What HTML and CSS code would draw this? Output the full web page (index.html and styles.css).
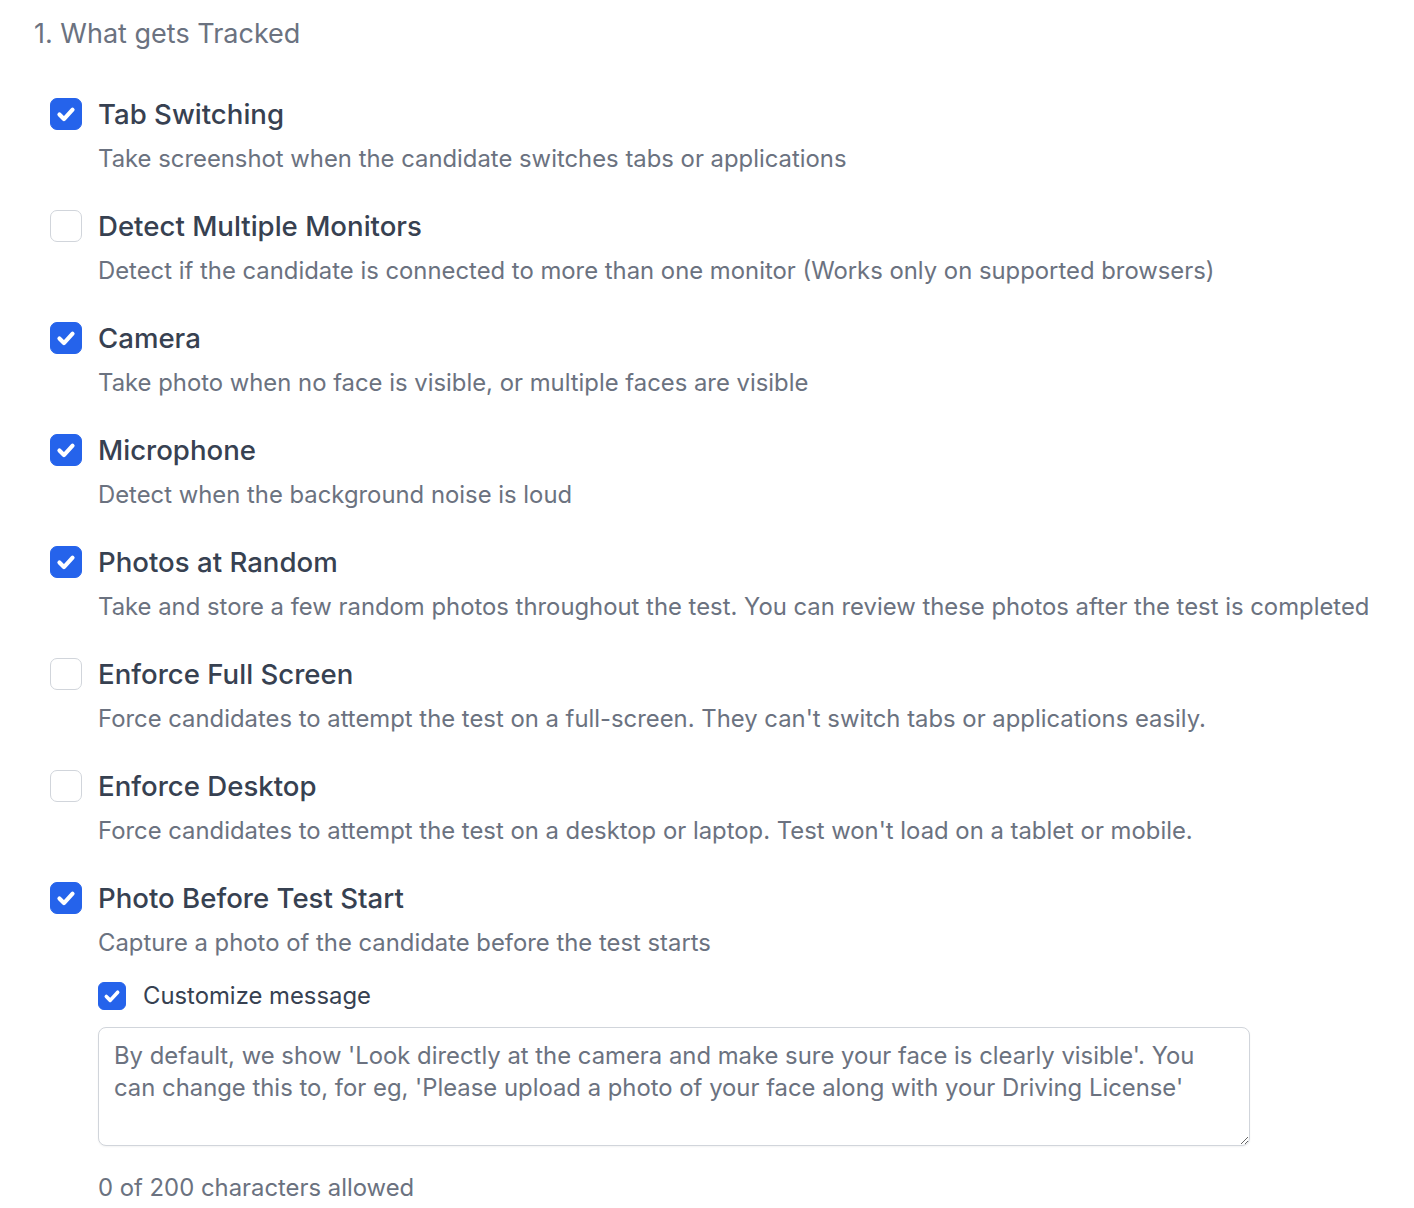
FILE: index.html
```html
<!DOCTYPE html>
<html lang="en">
<head>
    <meta charset="UTF-8">
    <meta name="viewport" content="width=device-width, initial-scale=1.0">
    <title>Proctoring settings</title>
    <link rel="stylesheet" href="styles.css">
</head>
<body>

<div class="page">
    <div class="section-title">1. What gets Tracked</div>

    <div class="options">
        <label class="option">
            <input type="checkbox" class="check" checked>
            <span class="box"><svg viewBox="0 0 16 16"><path d="M4.5 8.3l2.4 2.4 4.6-5"/></svg></span>
            <span class="option-text">
                <span class="option-label">Tab Switching</span>
                <span class="option-desc">Take screenshot when the candidate switches tabs or applications</span>
            </span>
        </label>

        <label class="option">
            <input type="checkbox" class="check">
            <span class="box"><svg viewBox="0 0 16 16"><path d="M4.5 8.3l2.4 2.4 4.6-5"/></svg></span>
            <span class="option-text">
                <span class="option-label">Detect Multiple Monitors</span>
                <span class="option-desc">Detect if the candidate is connected to more than one monitor (Works only on supported browsers)</span>
            </span>
        </label>

        <label class="option">
            <input type="checkbox" class="check" checked>
            <span class="box"><svg viewBox="0 0 16 16"><path d="M4.5 8.3l2.4 2.4 4.6-5"/></svg></span>
            <span class="option-text">
                <span class="option-label">Camera</span>
                <span class="option-desc">Take photo when no face is visible, or multiple faces are visible</span>
            </span>
        </label>

        <label class="option">
            <input type="checkbox" class="check" checked>
            <span class="box"><svg viewBox="0 0 16 16"><path d="M4.5 8.3l2.4 2.4 4.6-5"/></svg></span>
            <span class="option-text">
                <span class="option-label">Microphone</span>
                <span class="option-desc">Detect when the background noise is loud</span>
            </span>
        </label>

        <label class="option">
            <input type="checkbox" class="check" checked>
            <span class="box"><svg viewBox="0 0 16 16"><path d="M4.5 8.3l2.4 2.4 4.6-5"/></svg></span>
            <span class="option-text">
                <span class="option-label">Photos at Random</span>
                <span class="option-desc">Take and store a few random photos throughout the test. You can review these photos after the test is completed</span>
            </span>
        </label>

        <label class="option">
            <input type="checkbox" class="check">
            <span class="box"><svg viewBox="0 0 16 16"><path d="M4.5 8.3l2.4 2.4 4.6-5"/></svg></span>
            <span class="option-text">
                <span class="option-label">Enforce Full Screen</span>
                <span class="option-desc">Force candidates to attempt the test on a full-screen. They can't switch tabs or applications easily.</span>
            </span>
        </label>

        <label class="option">
            <input type="checkbox" class="check">
            <span class="box"><svg viewBox="0 0 16 16"><path d="M4.5 8.3l2.4 2.4 4.6-5"/></svg></span>
            <span class="option-text">
                <span class="option-label">Enforce Desktop</span>
                <span class="option-desc">Force candidates to attempt the test on a desktop or laptop. Test won't load on a tablet or mobile.</span>
            </span>
        </label>

        <div class="option">
            <label class="option-head">
                <input type="checkbox" class="check" checked>
                <span class="box"><svg viewBox="0 0 16 16"><path d="M4.5 8.3l2.4 2.4 4.6-5"/></svg></span>
                <span class="option-text">
                    <span class="option-label">Photo Before Test Start</span>
                    <span class="option-desc">Capture a photo of the candidate before the test starts</span>
                </span>
            </label>
            <div class="sub">
                <label class="sub-check">
                    <input type="checkbox" class="check" checked>
                    <span class="box small"><svg viewBox="0 0 16 16"><path d="M4.5 8.3l2.4 2.4 4.6-5"/></svg></span>
                    <span class="sub-label">Customize message</span>
                </label>
                <textarea class="message" placeholder="By default, we show 'Look directly at the camera and make sure your face is clearly visible'. You can change this to, for eg, 'Please upload a photo of your face along with your Driving License'"></textarea>
                <div class="counter">0 of 200 characters allowed</div>
            </div>
        </div>
    </div>
</div>

</body>
</html>
```

FILE: styles.css
```css
body {
    font-family: Inter, "Noto Sans", Arial, sans-serif;
    background-color: #fff;
    margin: 0;
    padding: 0;
    color: #374151;
}

.page {
    padding: 14px 34px 0 34px;
}

.section-title {
    font-size: 27px;
    line-height: 40px;
    color: #6b7280;
    font-weight: 400;
}

.options {
    padding-left: 16px;
    margin-top: 40px;
}

.option {
    margin-bottom: 29px;
}

.option,
.option-head {
    display: flex;
    align-items: flex-start;
    gap: 16px;
    cursor: pointer;
}

div.option {
    display: block;
}

.check {
    display: none;
}

.box {
    flex: none;
    width: 30px;
    height: 30px;
    margin-top: 4px;
    border: 1px solid #d1d5db;
    border-radius: 7px;
    background-color: #fff;
    display: flex;
    align-items: center;
    justify-content: center;
}

.box svg {
    width: 100%;
    height: 100%;
    fill: none;
    stroke: #fff;
    stroke-width: 2.2;
    stroke-linecap: round;
    stroke-linejoin: round;
    visibility: hidden;
}

.check:checked + .box {
    background-color: #2563eb;
    border-color: #2563eb;
}

.check:checked + .box svg {
    visibility: visible;
}

.box.small {
    width: 26px;
    height: 26px;
    border-radius: 6px;
    margin-top: 4px;
}

.option-text {
    display: flex;
    flex-direction: column;
}

.option-label {
    font-size: 27.6px;
    line-height: 40px;
    font-weight: 500;
    color: #374151;
}

.option-desc {
    font-size: 23.85px;
    line-height: 36px;
    margin-top: 7px;
    color: #6b7280;
}

.sub {
    padding-left: 48px;
}

.sub-check {
    display: flex;
    align-items: flex-start;
    gap: 17px;
    margin-top: 17px;
    cursor: pointer;
}

.sub-label {
    font-size: 23.85px;
    line-height: 36px;
    color: #374151;
}

.message {
    display: block;
    box-sizing: border-box;
    width: 1152px;
    height: 119px;
    margin-top: 13px;
    padding: 12px 15px;
    border: 1px solid #d1d5db;
    border-radius: 8px;
    font-family: inherit;
    font-size: 23.85px;
    line-height: 32px;
    color: #374151;
    box-shadow: 0 1px 2px rgba(0,0,0,0.05);
}

.message::placeholder {
    color: #6b7280;
    opacity: 1;
}

.counter {
    font-size: 23.85px;
    line-height: 36px;
    margin-top: 24px;
    color: #6b7280;
}
```
